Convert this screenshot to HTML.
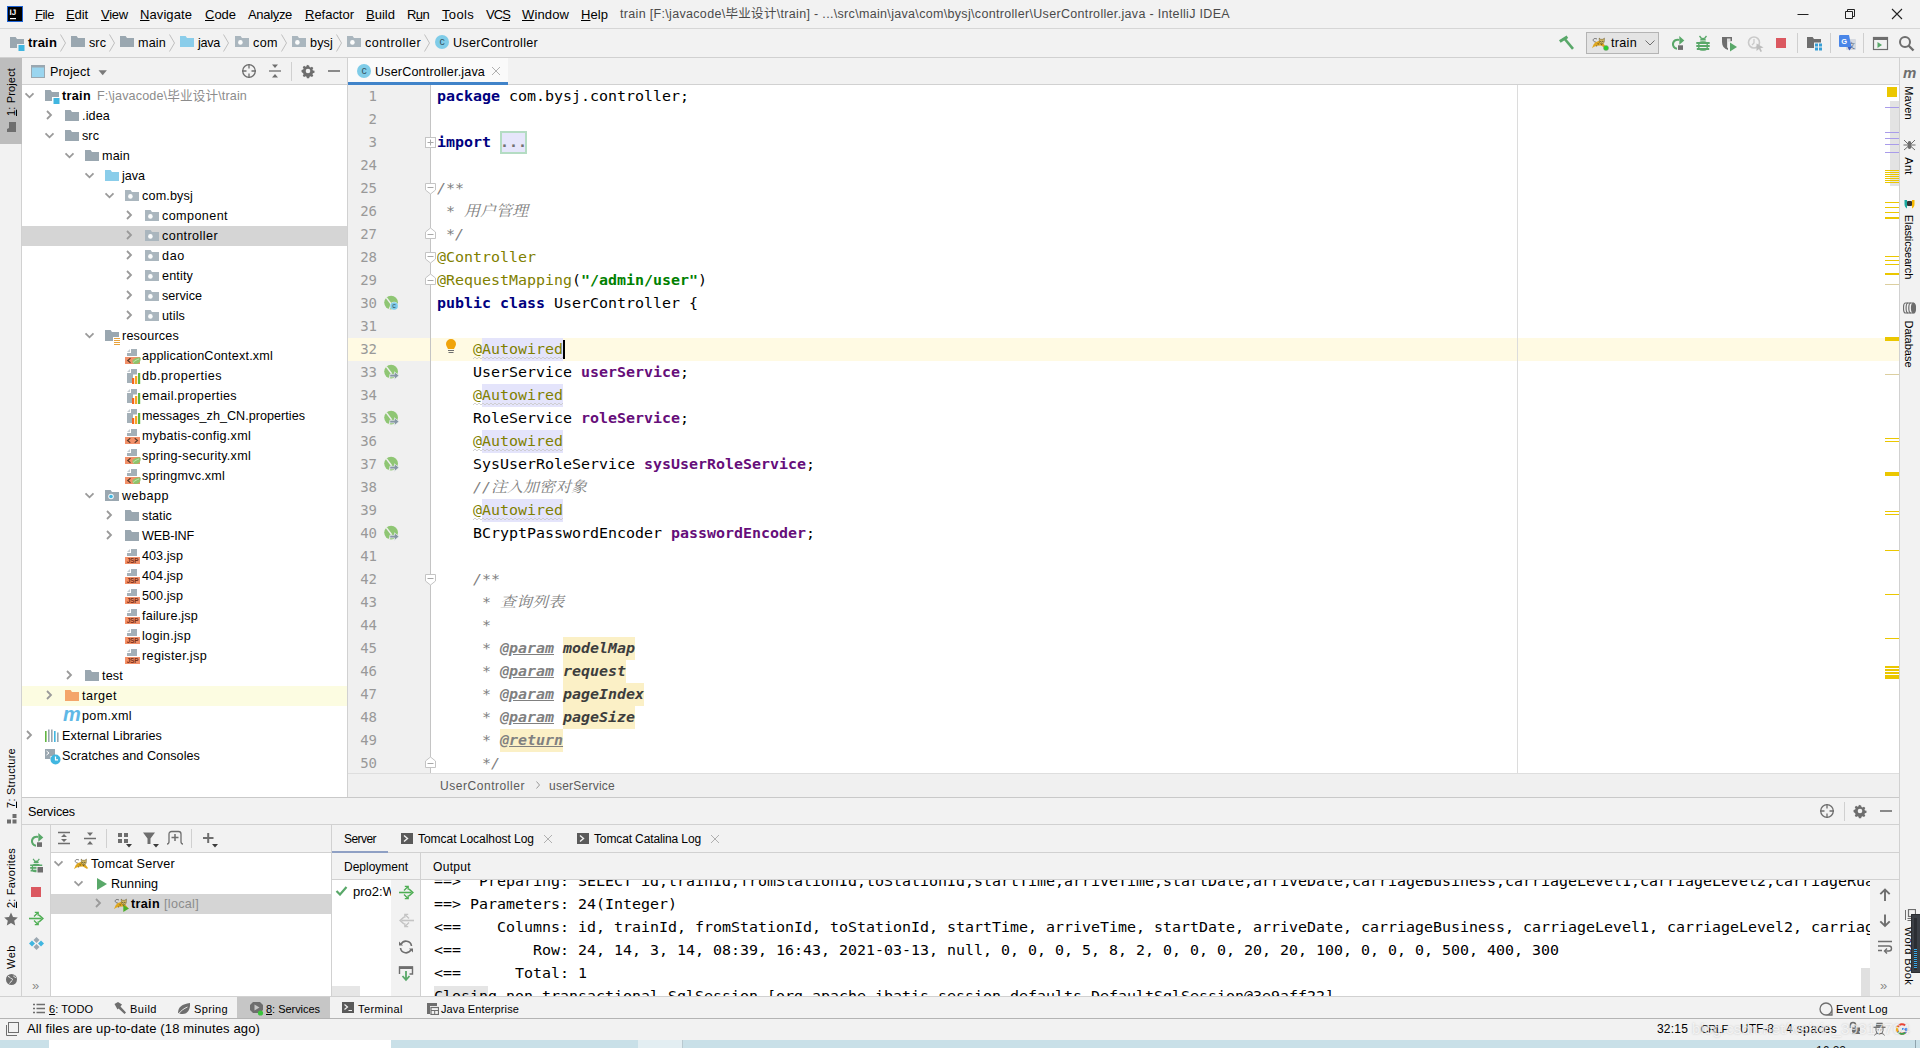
<!DOCTYPE html>
<html lang="en"><head><meta charset="utf-8"><title>train - UserController.java - IntelliJ IDEA</title>
<style>
html,body{margin:0;padding:0}
body{width:1920px;height:1048px;position:relative;overflow:hidden;background:#f2f2f2;font-family:"Liberation Sans","Noto Sans CJK SC",sans-serif;font-size:13px}
body div,body svg,.t{position:absolute}
.t{white-space:pre;line-height:20px;height:20px}
u{text-decoration:underline;text-underline-offset:1px}
.c{font-family:"DejaVu Sans Mono","Liberation Mono","Noto Serif CJK SC",monospace;font-size:14px;transform:scaleX(1.0678);transform-origin:0 0;line-height:23px;height:23px;white-space:pre;position:absolute;color:#000}
.c b{color:#000080}
.c i{color:#808080}
.cj{font-size:15px}
.c .dt{color:#808080}
.dp{color:#3d3d3d;font-weight:bold}
.an{color:#808000}
.st{color:#008000;font-weight:bold}
.fd{color:#660e7a;font-weight:bold}
.ln{font-family:"DejaVu Sans Mono","Liberation Mono",monospace;font-size:14px;line-height:23px;height:23px;color:#999;text-align:right;width:40px;position:absolute}
</style></head>
<body>
<div style="left:0px;top:0px;width:1920px;height:28px;background:#f2f2f2;"></div>
<div style="left:0px;top:28px;width:1920px;height:1px;background:#d6d6d6;"></div>
<svg style="left:7px;top:6px;" width="16" height="16" viewBox="0 0 16 16"><rect width="16" height="16" fill="#1d62d6"/><rect x="1" y="1" width="14" height="14" fill="#000"/><text x="2.600" y="9" font-family="Liberation Sans,sans-serif" font-weight="bold" font-size="8" fill="#fff" text-rendering="geometricPrecision">IJ</text><rect x="3" y="12" width="6" height="1.200" fill="#fff"/></svg>
<span class="t" style="left:35px;top:5px;font-size:13px;color:#000;letter-spacing:-0.492px;"><u>F</u>ile</span>
<span class="t" style="left:66px;top:5px;font-size:13px;color:#000;letter-spacing:-0.102px;"><u>E</u>dit</span>
<span class="t" style="left:101px;top:5px;font-size:13px;color:#000;letter-spacing:-0.238px;"><u>V</u>iew</span>
<span class="t" style="left:140px;top:5px;font-size:13px;color:#000;letter-spacing:0.086px;"><u>N</u>avigate</span>
<span class="t" style="left:205px;top:5px;font-size:13px;color:#000;letter-spacing:-0.023px;"><u>C</u>ode</span>
<span class="t" style="left:248px;top:5px;font-size:13px;color:#000;letter-spacing:-0.324px;">Anal<u>y</u>ze</span>
<span class="t" style="left:305px;top:5px;font-size:13px;color:#000;letter-spacing:-0.018px;"><u>R</u>efactor</span>
<span class="t" style="left:366px;top:5px;font-size:13px;color:#000;letter-spacing:0.016px;"><u>B</u>uild</span>
<span class="t" style="left:407px;top:5px;font-size:13px;color:#000;letter-spacing:-0.620px;">R<u>u</u>n</span>
<span class="t" style="left:442px;top:5px;font-size:13px;color:#000;letter-spacing:0.328px;"><u>T</u>ools</span>
<span class="t" style="left:486px;top:5px;font-size:13px;color:#000;letter-spacing:-0.911px;">VC<u>S</u></span>
<span class="t" style="left:522px;top:5px;font-size:13px;color:#000;letter-spacing:0.125px;"><u>W</u>indow</span>
<span class="t" style="left:581px;top:5px;font-size:13px;color:#000;letter-spacing:0.062px;"><u>H</u>elp</span>
<span class="t" style="left:620px;top:4px;font-size:12.5px;color:#4a4a4a;letter-spacing:0.322px;">train [F:\javacode\毕业设计\train] - ...\src\main\java\com\bysj\controller\UserController.java - IntelliJ IDEA</span>
<svg style="left:1797px;top:8px;" width="12" height="12" viewBox="0 0 12 12"><path d="M0.500 6.500h11" stroke="#222" stroke-width="1"/></svg>
<svg style="left:1844px;top:8px;" width="12" height="12" viewBox="0 0 12 12"><path d="M1.500 3.500h7v7h-7zM3.500 3.500v-2h7v7h-2" fill="none" stroke="#222" stroke-width="1"/></svg>
<svg style="left:1891px;top:8px;" width="12" height="12" viewBox="0 0 12 12"><path d="M1 1l10 10M11 1L1 11" stroke="#222" stroke-width="1.100"/></svg>
<div style="left:0px;top:29px;width:1920px;height:28px;background:#f2f2f2;"></div>
<div style="left:0px;top:57px;width:1920px;height:1px;background:#d1d1d1;"></div>
<svg style="left:9px;top:35px;" width="16" height="16" viewBox="0 0 16 16"><path d="M1 2h5.6l1.4 2H15v5H8v4H1z" fill="#9aa7b0"/><rect x="9.5" y="10" width="6" height="6" fill="#40b6e0"/></svg>
<span class="t" style="left:28px;top:33px;font-size:13px;color:#000;font-weight:bold;letter-spacing:0.166px;">train</span>
<svg style="left:59px;top:33px;" width="9" height="20" viewBox="0 0 9 20"><path d="M1.500 1.500l5 8.500-5 8.500" fill="none" stroke="#c0c0c0" stroke-width="1"/></svg>
<svg style="left:70px;top:34px;" width="16" height="16" viewBox="0 0 16 16"><path d="M1 2h5.6l1.4 2H15v9H1z" fill="#9aa7b0"/></svg>
<span class="t" style="left:89px;top:33px;font-size:12.6px;color:#000;letter-spacing:0.068px;">src</span>
<svg style="left:108px;top:33px;" width="9" height="20" viewBox="0 0 9 20"><path d="M1.500 1.500l5 8.500-5 8.500" fill="none" stroke="#c0c0c0" stroke-width="1"/></svg>
<svg style="left:119px;top:34px;" width="16" height="16" viewBox="0 0 16 16"><path d="M1 2h5.6l1.4 2H15v9H1z" fill="#9aa7b0"/></svg>
<span class="t" style="left:138px;top:33px;font-size:12.6px;color:#000;letter-spacing:0.176px;">main</span>
<svg style="left:168px;top:33px;" width="9" height="20" viewBox="0 0 9 20"><path d="M1.500 1.500l5 8.500-5 8.500" fill="none" stroke="#c0c0c0" stroke-width="1"/></svg>
<svg style="left:179px;top:34px;" width="16" height="16" viewBox="0 0 16 16"><path d="M1 2h5.6l1.4 2H15v9H1z" fill="#8acdea"/></svg>
<span class="t" style="left:198px;top:33px;font-size:12.6px;color:#000;letter-spacing:-0.277px;">java</span>
<svg style="left:222px;top:33px;" width="9" height="20" viewBox="0 0 9 20"><path d="M1.500 1.500l5 8.500-5 8.500" fill="none" stroke="#c0c0c0" stroke-width="1"/></svg>
<svg style="left:234px;top:34px;" width="16" height="16" viewBox="0 0 16 16"><path d="M1 2h5.6l1.4 2H15v9H1z" fill="#aab6be"/><circle cx="6.400" cy="8.400" r="2.300" fill="#fbfcfc"/></svg>
<span class="t" style="left:253px;top:33px;font-size:12.6px;color:#000;letter-spacing:0.401px;">com</span>
<svg style="left:280px;top:33px;" width="9" height="20" viewBox="0 0 9 20"><path d="M1.500 1.500l5 8.500-5 8.500" fill="none" stroke="#c0c0c0" stroke-width="1"/></svg>
<svg style="left:291px;top:34px;" width="16" height="16" viewBox="0 0 16 16"><path d="M1 2h5.6l1.4 2H15v9H1z" fill="#aab6be"/><circle cx="6.400" cy="8.400" r="2.300" fill="#fbfcfc"/></svg>
<span class="t" style="left:310px;top:33px;font-size:12.6px;color:#000;letter-spacing:0.148px;">bysj</span>
<svg style="left:335px;top:33px;" width="9" height="20" viewBox="0 0 9 20"><path d="M1.500 1.500l5 8.500-5 8.500" fill="none" stroke="#c0c0c0" stroke-width="1"/></svg>
<svg style="left:346px;top:34px;" width="16" height="16" viewBox="0 0 16 16"><path d="M1 2h5.6l1.4 2H15v9H1z" fill="#aab6be"/><circle cx="6.400" cy="8.400" r="2.300" fill="#fbfcfc"/></svg>
<span class="t" style="left:365px;top:33px;font-size:12.6px;color:#000;letter-spacing:0.420px;">controller</span>
<svg style="left:423px;top:33px;" width="9" height="20" viewBox="0 0 9 20"><path d="M1.500 1.500l5 8.500-5 8.500" fill="none" stroke="#c0c0c0" stroke-width="1"/></svg>
<svg style="left:434px;top:34px;" width="16" height="16" viewBox="0 0 16 16"><circle cx="8" cy="8" r="7" fill="#7fcce8"/><text x="8" y="11.200" font-family="Liberation Sans,sans-serif" font-size="10.500" fill="#34525e" text-anchor="middle">c</text></svg>
<span class="t" style="left:453px;top:33px;font-size:12.6px;color:#000;letter-spacing:0.272px;">UserController</span>
<svg style="left:1558px;top:35px;" width="18" height="16" viewBox="0 0 18 16"><path d="M1.800 6.500L9.400 1.700" stroke="#59a869" stroke-width="3" fill="none"/><path d="M6.800 4L15 13.800" stroke="#59a869" stroke-width="2.600" fill="none"/></svg>
<div style="left:1586px;top:32px;width:73px;height:22px;background:#e4e4e4;border:1px solid #b4b4b4;box-sizing:border-box"></div>
<svg style="left:1591px;top:34px;" width="17" height="17" viewBox="0 0 17 17"><path d="M5.200 8.200C3 8 1.800 6.800 2.300 5.500 2.800 4.300 4.500 4.300 6 5" fill="none" stroke="#4a4a4a" stroke-width=".7"/><path d="M4.500 8.300L9 6.500l3 2.500 3.200 4.300-1.600.5L10 11.600l-4 .1-3 1.100L1 14.300l1.500-3.800z" fill="#dea71f"/><path d="M6.500 9.300l1.500.5-1 .9zM5 11.500l1.300.3-.5 1zM10 10l1.300.8-1 .5z" fill="#3a3020"/><path d="M8.200 4.100l1.400 1.200h2.400l1.400-1.200-.2 3.900-1.200 1.700H9.600L8.400 8z" fill="#dcc268" stroke="#5a4a20" stroke-width=".5"/><path d="M9.300 7.300h1v.8h-1zM11.300 7.300h1v.8h-1zM10.300 8.600h1l-.5.700z" fill="#2a2418"/><path d="M9.800 5.800l.5.900M11.800 5.800l-.5.900" stroke="#a8862c" stroke-width=".5"/></svg>
<svg style="left:1602px;top:44px;" width="8" height="8" viewBox="0 0 8 8"><circle cx="4" cy="4" r="2.500" fill="#27d127" stroke="#8a8a8a" stroke-width=".5"/></svg>
<span class="t" style="left:1611px;top:33px;font-size:12.6px;color:#000;letter-spacing:0.300px;">train</span>
<svg style="left:1644px;top:38px;" width="12" height="10" viewBox="0 0 12 10"><path d="M1.500 2.500l4.500 4.500 4.500-4.500" fill="none" stroke="#6e6e6e" stroke-width="1"/></svg>
<svg style="left:1669px;top:34px;" width="17" height="17" viewBox="0 0 17 17"><path d="M10 6A4.500 4.500 0 1 0 8 14.700" fill="none" stroke="#59a869" stroke-width="2.100"/><path d="M10.300 2l5 4.400-5 4.400z" fill="#59a869"/><rect x="9" y="11.300" width="5" height="4.600" fill="#6e6e6e"/></svg>
<svg style="left:1695px;top:35px;" width="16" height="16" viewBox="0 0 16 16"><path d="M4.500 1l2 2.500M11.500 1l-2 2.500" stroke="#59a869" stroke-width="1.300" fill="none"/><path d="M5.200 5.500a2.800 2.800 0 0 1 5.600 0z" fill="#59a869"/><rect x="3" y="6.300" width="10" height="9.400" rx="4" fill="#59a869"/><path d="M1.300 8h13.400M1.300 11h13.400M1.800 14h12.400" stroke="#59a869" stroke-width="1.800"/><path d="M4.500 9.500h7M4.500 12.500h7" stroke="#f2f2f2" stroke-width="1"/></svg>
<svg style="left:1720px;top:35px;" width="18" height="17" viewBox="0 0 18 17"><path d="M2 2h10v4L8 7v8C4 13.500 2 11 2 7z" fill="#6e6e6e"/><path d="M7 3.500h3.500v8L7 13z" fill="#f2f2f2" opacity=".85"/><path d="M10 7.500l7 4.500-7 4.500z" fill="#59a869"/></svg>
<svg style="left:1747px;top:35px;" width="18" height="17" viewBox="0 0 18 17"><circle cx="7" cy="7.500" r="5.500" fill="none" stroke="#c9c9c9" stroke-width="1.600"/><path d="M7 4v4l-2 2" stroke="#c9c9c9" stroke-width="1.300" fill="none"/><path d="M9.500 8.500l7 4-3 .8 1.500 3-1.500.7-1.500-3-2.500 2z" fill="#bdbdbd"/></svg>
<div style="left:1776px;top:38px;width:10px;height:10px;background:#db5860;"></div>
<div style="left:1797px;top:33px;width:1px;height:20px;background:#cfcfcf;"></div>
<svg style="left:1806px;top:35px;" width="18" height="17" viewBox="0 0 18 17"><path d="M1 2h5.600l1.400 2H15v5H9v4H1z" fill="#6e6e6e"/><rect x="8" y="7.500" width="8.500" height="8.500" fill="#f2f2f2"/><rect x="9" y="8.500" width="3" height="3" fill="#389fd6"/><rect x="13" y="8.500" width="3" height="3" fill="#389fd6"/><rect x="9" y="12.500" width="3" height="3" fill="#389fd6"/><rect x="13" y="12.500" width="3" height="3" fill="#389fd6"/></svg>
<div style="left:1830px;top:33px;width:1px;height:20px;background:#cfcfcf;"></div>
<svg style="left:1838px;top:34px;" width="20" height="19" viewBox="0 0 20 19"><rect x="8" y="5" width="10" height="11" rx="1" fill="#d5d9e0"/><text x="13.500" y="14" font-size="7" fill="#5b6b86" text-anchor="middle" font-family="Noto Sans CJK SC,sans-serif">文</text><path d="M2 1h9l2.500 12H2a1 1 0 0 1-1-1V2a1 1 0 0 1 1-1z" fill="#4a86e8"/><text x="6.200" y="10" font-size="7.500" font-weight="bold" fill="#fff" text-anchor="middle" font-family="Liberation Sans,sans-serif">G</text><path d="M9.500 13l2 3.500 2-3.500z" fill="#3b5fc4"/></svg>
<div style="left:1863px;top:33px;width:1px;height:20px;background:#cfcfcf;"></div>
<svg style="left:1872px;top:36px;" width="17" height="15" viewBox="0 0 17 15"><rect x="1.500" y="1.500" width="14" height="12" fill="none" stroke="#6e6e6e" stroke-width="1.200"/><rect x="1" y="1" width="15" height="3" fill="#6e6e6e"/><path d="M5.500 6l4.500 3-4.500 3z" fill="#59a869"/></svg>
<svg style="left:1898px;top:35px;" width="17" height="17" viewBox="0 0 17 17"><circle cx="7" cy="7" r="5" fill="none" stroke="#6e6e6e" stroke-width="2"/><path d="M10.500 10.500l5 5" stroke="#6e6e6e" stroke-width="2.400"/></svg>
<div style="left:0px;top:58px;width:21px;height:939px;background:#f2f2f2;"></div>
<div style="left:21px;top:58px;width:1px;height:939px;background:#d1d1d1;"></div>
<div style="left:0px;top:58px;width:22px;height:86px;background:#bdbdbd;"></div>
<span class="t" style="left:11px;top:92px;font-size:11px;color:#000;transform:translate(-50%,-50%) rotate(-90deg);letter-spacing:0.152px;"><u>1</u>: Project</span>
<svg style="left:5px;top:122px;" width="12" height="10" viewBox="0 0 12 10"><path d="M0 1h4l1 2h7v7H0z" fill="#6e6e6e" transform="rotate(-90 6 5)"/></svg>
<span class="t" style="left:11px;top:778px;font-size:11px;color:#000;transform:translate(-50%,-50%) rotate(-90deg);letter-spacing:0.260px;"><u>7</u>: Structure</span>
<svg style="left:7px;top:814px;" width="10" height="10" viewBox="0 0 10 10"><rect x="5.500" y="0" width="4" height="4" fill="#6e6e6e"/><rect x="0" y="5.500" width="4" height="4" fill="#6e6e6e"/><rect x="5.500" y="5.500" width="4" height="4" fill="#6e6e6e"/></svg>
<span class="t" style="left:11px;top:878px;font-size:11px;color:#000;transform:translate(-50%,-50%) rotate(-90deg);letter-spacing:0.210px;"><u>2</u>: Favorites</span>
<svg style="left:4px;top:912px;" width="14" height="14" viewBox="0 0 14 14"><path d="M7 0.500l2 4.500 4.800.5-3.600 3.200 1 4.800L7 11l-4.200 2.500 1-4.800L0.200 5.500 5 5z" fill="#6e6e6e"/></svg>
<span class="t" style="left:11px;top:957px;font-size:11px;color:#000;transform:translate(-50%,-50%) rotate(-90deg);letter-spacing:0.526px;">Web</span>
<svg style="left:5px;top:973px;" width="13" height="13" viewBox="0 0 13 13"><circle cx="6.500" cy="6.500" r="5.500" fill="#6e6e6e"/><path d="M3 3.500c2 0 2 2 3.500 2s1 2 0 2.500-1 2-2 2.500M9 2.500c-.5 1.500 1 2 2 2" stroke="#f2f2f2" stroke-width="1" fill="none"/></svg>
<div style="left:22px;top:58px;width:325px;height:26px;background:#f2f2f2;"></div>
<div style="left:22px;top:84px;width:325px;height:1px;background:#d1d1d1;"></div>
<svg style="left:31px;top:65px;" width="16" height="14" viewBox="0 0 16 14"><rect x="0.500" y="0.500" width="13" height="12" fill="#9ad5ef" stroke="#9aa7b0"/><rect x="0" y="0" width="14" height="2.500" fill="#9aa7b0"/></svg>
<span class="t" style="left:50px;top:62px;font-size:12.6px;color:#000;letter-spacing:0.114px;">Project</span>
<svg style="left:98px;top:70px;" width="10" height="6" viewBox="0 0 10 6"><path d="M0.500 0.300h8.400l-4.200 5z" fill="#7a7a7a"/></svg>
<svg style="left:241px;top:63px;" width="16" height="16" viewBox="0 0 16 16"><circle cx="8" cy="8" r="6.300" fill="none" stroke="#6e6e6e" stroke-width="1.300"/><path d="M8 1v4.500M8 10.500V15M1 8h4.500M10.500 8H15" stroke="#6e6e6e" stroke-width="1.300"/></svg>
<svg style="left:268px;top:63px;" width="14" height="16" viewBox="0 0 14 16"><path d="M1 8h12" stroke="#6e6e6e" stroke-width="1.300"/><path d="M4 1.500h6l-3 3.500zM4 14.500h6l-3-3.500z" fill="#6e6e6e"/></svg>
<div style="left:291px;top:62px;width:1px;height:19px;background:#d0d0d0;"></div>
<svg style="left:300px;top:63px;" width="16" height="16" viewBox="0 0 16 16"><path d="M8 1.200l1.300.2.500 1.900 1.200.5 1.700-1 1.600 1.600-1 1.700.5 1.200 1.900.5v2.400l-1.900.5-.5 1.200 1 1.700-1.600 1.600-1.700-1-1.200.5-.5 1.900H6.700l-.5-1.900-1.200-.5-1.700 1-1.600-1.600 1-1.700-.5-1.200L.3 9.200V6.800l1.900-.5.500-1.200-1-1.700 1.600-1.600 1.700 1 1.200-.5.500-1.900z" fill="#6e6e6e" transform="translate(1.300,1.300) scale(.84)"/><circle cx="8" cy="8" r="2.300" fill="#f2f2f2"/></svg>
<svg style="left:327px;top:66px;" width="14" height="10" viewBox="0 0 14 10"><path d="M1 5h12" stroke="#6e6e6e" stroke-width="1.600"/></svg>
<div style="left:22px;top:85px;width:325px;height:712px;background:#fff;"></div>
<div style="left:347px;top:58px;width:1px;height:740px;background:#d1d1d1;"></div>
<svg style="left:24px;top:89.5px;" width="11" height="10" viewBox="0 0 11 10"><path d="M1.500 3.300l4 4 4-4" fill="none" stroke="#9a9a9a" stroke-width="1.800"/></svg>
<svg style="left:44px;top:88px;" width="16" height="16" viewBox="0 0 16 16"><path d="M1 2h5.6l1.4 2H15v5H8v4H1z" fill="#9aa7b0"/><rect x="9.5" y="10" width="6" height="6" fill="#40b6e0"/></svg>
<span class="t" style="left:62px;top:86px;font-size:12.6px;color:#000;font-weight:bold;letter-spacing:0.341px;">train</span>
<span class="t" style="left:97px;top:86px;font-size:12.6px;color:#8c8c8c;letter-spacing:0.137px;">F:\javacode\毕业设计\train</span>
<svg style="left:43.5px;top:108.5px;" width="10" height="12" viewBox="0 0 10 12"><path d="M3 2l4 4-4 4" fill="none" stroke="#9a9a9a" stroke-width="1.800"/></svg>
<svg style="left:64px;top:108px;" width="16" height="16" viewBox="0 0 16 16"><path d="M1 2h5.6l1.4 2H15v9H1z" fill="#9aa7b0"/></svg>
<span class="t" style="left:82px;top:106px;font-size:12.6px;color:#000;letter-spacing:0.138px;">.idea</span>
<svg style="left:44px;top:129.5px;" width="11" height="10" viewBox="0 0 11 10"><path d="M1.500 3.300l4 4 4-4" fill="none" stroke="#9a9a9a" stroke-width="1.800"/></svg>
<svg style="left:64px;top:128px;" width="16" height="16" viewBox="0 0 16 16"><path d="M1 2h5.6l1.4 2H15v9H1z" fill="#9aa7b0"/></svg>
<span class="t" style="left:82px;top:126px;font-size:12.6px;color:#000;letter-spacing:0.068px;">src</span>
<svg style="left:64px;top:149.5px;" width="11" height="10" viewBox="0 0 11 10"><path d="M1.500 3.300l4 4 4-4" fill="none" stroke="#9a9a9a" stroke-width="1.800"/></svg>
<svg style="left:84px;top:148px;" width="16" height="16" viewBox="0 0 16 16"><path d="M1 2h5.6l1.4 2H15v9H1z" fill="#9aa7b0"/></svg>
<span class="t" style="left:102px;top:146px;font-size:12.6px;color:#000;letter-spacing:0.176px;">main</span>
<svg style="left:84px;top:169.5px;" width="11" height="10" viewBox="0 0 11 10"><path d="M1.500 3.300l4 4 4-4" fill="none" stroke="#9a9a9a" stroke-width="1.800"/></svg>
<svg style="left:104px;top:168px;" width="16" height="16" viewBox="0 0 16 16"><path d="M1 2h5.6l1.4 2H15v9H1z" fill="#8acdea"/></svg>
<span class="t" style="left:122px;top:166px;font-size:12.6px;color:#000;letter-spacing:-0.027px;">java</span>
<svg style="left:104px;top:189.5px;" width="11" height="10" viewBox="0 0 11 10"><path d="M1.500 3.300l4 4 4-4" fill="none" stroke="#9a9a9a" stroke-width="1.800"/></svg>
<svg style="left:124px;top:188px;" width="16" height="16" viewBox="0 0 16 16"><path d="M1 2h5.6l1.4 2H15v9H1z" fill="#aab6be"/><circle cx="6.400" cy="8.400" r="2.300" fill="#fbfcfc"/></svg>
<span class="t" style="left:142px;top:186px;font-size:12.6px;color:#000;letter-spacing:0.164px;">com.bysj</span>
<svg style="left:123.5px;top:208.5px;" width="10" height="12" viewBox="0 0 10 12"><path d="M3 2l4 4-4 4" fill="none" stroke="#9a9a9a" stroke-width="1.800"/></svg>
<svg style="left:144px;top:208px;" width="16" height="16" viewBox="0 0 16 16"><path d="M1 2h5.6l1.4 2H15v9H1z" fill="#aab6be"/><circle cx="6.400" cy="8.400" r="2.300" fill="#fbfcfc"/></svg>
<span class="t" style="left:162px;top:206px;font-size:12.6px;color:#000;letter-spacing:0.410px;">component</span>
<div style="left:22px;top:226px;width:325px;height:20px;background:#d5d5d5;"></div>
<svg style="left:123.5px;top:228.5px;" width="10" height="12" viewBox="0 0 10 12"><path d="M3 2l4 4-4 4" fill="none" stroke="#9a9a9a" stroke-width="1.800"/></svg>
<svg style="left:144px;top:228px;" width="16" height="16" viewBox="0 0 16 16"><path d="M1 2h5.6l1.4 2H15v9H1z" fill="#aab6be"/><circle cx="6.400" cy="8.400" r="2.300" fill="#fbfcfc"/></svg>
<span class="t" style="left:162px;top:226px;font-size:12.6px;color:#000;letter-spacing:0.420px;">controller</span>
<svg style="left:123.5px;top:248.5px;" width="10" height="12" viewBox="0 0 10 12"><path d="M3 2l4 4-4 4" fill="none" stroke="#9a9a9a" stroke-width="1.800"/></svg>
<svg style="left:144px;top:248px;" width="16" height="16" viewBox="0 0 16 16"><path d="M1 2h5.6l1.4 2H15v9H1z" fill="#aab6be"/><circle cx="6.400" cy="8.400" r="2.300" fill="#fbfcfc"/></svg>
<span class="t" style="left:162px;top:246px;font-size:12.6px;color:#000;letter-spacing:0.661px;">dao</span>
<svg style="left:123.5px;top:268.5px;" width="10" height="12" viewBox="0 0 10 12"><path d="M3 2l4 4-4 4" fill="none" stroke="#9a9a9a" stroke-width="1.800"/></svg>
<svg style="left:144px;top:268px;" width="16" height="16" viewBox="0 0 16 16"><path d="M1 2h5.6l1.4 2H15v9H1z" fill="#aab6be"/><circle cx="6.400" cy="8.400" r="2.300" fill="#fbfcfc"/></svg>
<span class="t" style="left:162px;top:266px;font-size:12.6px;color:#000;letter-spacing:0.148px;">entity</span>
<svg style="left:123.5px;top:288.5px;" width="10" height="12" viewBox="0 0 10 12"><path d="M3 2l4 4-4 4" fill="none" stroke="#9a9a9a" stroke-width="1.800"/></svg>
<svg style="left:144px;top:288px;" width="16" height="16" viewBox="0 0 16 16"><path d="M1 2h5.6l1.4 2H15v9H1z" fill="#aab6be"/><circle cx="6.400" cy="8.400" r="2.300" fill="#fbfcfc"/></svg>
<span class="t" style="left:162px;top:286px;font-size:12.6px;color:#000;letter-spacing:0.016px;">service</span>
<svg style="left:123.5px;top:308.5px;" width="10" height="12" viewBox="0 0 10 12"><path d="M3 2l4 4-4 4" fill="none" stroke="#9a9a9a" stroke-width="1.800"/></svg>
<svg style="left:144px;top:308px;" width="16" height="16" viewBox="0 0 16 16"><path d="M1 2h5.6l1.4 2H15v9H1z" fill="#aab6be"/><circle cx="6.400" cy="8.400" r="2.300" fill="#fbfcfc"/></svg>
<span class="t" style="left:162px;top:306px;font-size:12.6px;color:#000;letter-spacing:0.119px;">utils</span>
<svg style="left:84px;top:329.5px;" width="11" height="10" viewBox="0 0 11 10"><path d="M1.500 3.300l4 4 4-4" fill="none" stroke="#9a9a9a" stroke-width="1.800"/></svg>
<svg style="left:104px;top:328px;" width="17" height="17" viewBox="0 0 17 17"><path d="M1 2h5.6l1.4 2H15v5H9v4H1z" fill="#9aa7b0"/><path d="M10 10.5h6M10 12.5h6M10 14.5h6M10 16.5h6" stroke="#e8a33d" stroke-width="1"/></svg>
<span class="t" style="left:122px;top:326px;font-size:12.6px;color:#000;letter-spacing:0.189px;">resources</span>
<svg style="left:125px;top:348px;" width="17" height="16" viewBox="0 0 17 16"><path d="M6 1h6v7H2V5h4z" fill="#9aa7b0" opacity=".9"/><path d="M5 1L2 4h3z" fill="#9aa7b0" opacity=".6"/><rect x="0" y="9" width="15" height="7" fill="#f29069"/><path d="M5.5 10.3L2.7 12.5l2.8 2.2" fill="none" stroke="#5a3a2a" stroke-width="1.1"/><path d="M7.5 14.5c-.6-3 2-5 8-5 .6 3.5-1 6.5-4.5 6.5-1.6 0-2.6-.5-3.5-1.500z" fill="#8fc36b"/><path d="M8 14.6c2-2 4-3 6-3.6" stroke="#d9efcb" stroke-width=".7" fill="none"/></svg>
<span class="t" style="left:142px;top:346px;font-size:12.6px;color:#000;letter-spacing:0.195px;">applicationContext.xml</span>
<svg style="left:125px;top:368px;" width="16" height="16" viewBox="0 0 16 16"><path d="M6 1h6v5.500H8V15H2V5h4z" fill="#9aa7b0" opacity=".9"/><path d="M5 1L2 4h3z" fill="#9aa7b0" opacity=".6"/><rect x="7" y="10" width="2.200" height="6" fill="#f26522"/><rect x="10" y="8" width="2.200" height="8" fill="#f5a623"/><rect x="13" y="5" width="2.200" height="11" fill="#62b543"/></svg>
<span class="t" style="left:142px;top:366px;font-size:12.6px;color:#000;letter-spacing:0.499px;">db.properties</span>
<svg style="left:125px;top:388px;" width="16" height="16" viewBox="0 0 16 16"><path d="M6 1h6v5.500H8V15H2V5h4z" fill="#9aa7b0" opacity=".9"/><path d="M5 1L2 4h3z" fill="#9aa7b0" opacity=".6"/><rect x="7" y="10" width="2.200" height="6" fill="#f26522"/><rect x="10" y="8" width="2.200" height="8" fill="#f5a623"/><rect x="13" y="5" width="2.200" height="11" fill="#62b543"/></svg>
<span class="t" style="left:142px;top:386px;font-size:12.6px;color:#000;letter-spacing:0.337px;">email.properties</span>
<svg style="left:125px;top:408px;" width="16" height="16" viewBox="0 0 16 16"><path d="M6 1h6v5.500H8V15H2V5h4z" fill="#9aa7b0" opacity=".9"/><path d="M5 1L2 4h3z" fill="#9aa7b0" opacity=".6"/><rect x="7" y="10" width="2.200" height="6" fill="#f26522"/><rect x="10" y="8" width="2.200" height="8" fill="#f5a623"/><rect x="13" y="5" width="2.200" height="11" fill="#62b543"/></svg>
<span class="t" style="left:142px;top:406px;font-size:12.6px;color:#000;letter-spacing:0.024px;">messages_zh_CN.properties</span>
<svg style="left:125px;top:428px;" width="16" height="16" viewBox="0 0 16 16"><path d="M6 1h6v7H2V5h4z" fill="#9aa7b0" opacity=".9"/><path d="M5 1L2 4h3z" fill="#9aa7b0" opacity=".6"/><rect x="0" y="9" width="15" height="7" fill="#f29069"/><path d="M5.3 10.3L2.5 12.5l2.800 2.200M9.700 10.300l2.800 2.200-2.800 2.200" fill="none" stroke="#5a3a2a" stroke-width="1.1"/></svg>
<span class="t" style="left:142px;top:426px;font-size:12.6px;color:#000;letter-spacing:0.262px;">mybatis-config.xml</span>
<svg style="left:125px;top:448px;" width="17" height="16" viewBox="0 0 17 16"><path d="M6 1h6v7H2V5h4z" fill="#9aa7b0" opacity=".9"/><path d="M5 1L2 4h3z" fill="#9aa7b0" opacity=".6"/><rect x="0" y="9" width="15" height="7" fill="#f29069"/><path d="M5.5 10.3L2.7 12.5l2.8 2.2" fill="none" stroke="#5a3a2a" stroke-width="1.1"/><path d="M7.5 14.5c-.6-3 2-5 8-5 .6 3.5-1 6.5-4.5 6.5-1.6 0-2.6-.5-3.5-1.500z" fill="#8fc36b"/><path d="M8 14.6c2-2 4-3 6-3.6" stroke="#d9efcb" stroke-width=".7" fill="none"/></svg>
<span class="t" style="left:142px;top:446px;font-size:12.6px;color:#000;letter-spacing:0.261px;">spring-security.xml</span>
<svg style="left:125px;top:468px;" width="17" height="16" viewBox="0 0 17 16"><path d="M6 1h6v7H2V5h4z" fill="#9aa7b0" opacity=".9"/><path d="M5 1L2 4h3z" fill="#9aa7b0" opacity=".6"/><rect x="0" y="9" width="15" height="7" fill="#f29069"/><path d="M5.5 10.3L2.7 12.5l2.8 2.2" fill="none" stroke="#5a3a2a" stroke-width="1.1"/><path d="M7.5 14.5c-.6-3 2-5 8-5 .6 3.5-1 6.5-4.5 6.5-1.6 0-2.6-.5-3.5-1.500z" fill="#8fc36b"/><path d="M8 14.6c2-2 4-3 6-3.6" stroke="#d9efcb" stroke-width=".7" fill="none"/></svg>
<span class="t" style="left:142px;top:466px;font-size:12.6px;color:#000;letter-spacing:0.194px;">springmvc.xml</span>
<svg style="left:84px;top:489.5px;" width="11" height="10" viewBox="0 0 11 10"><path d="M1.500 3.300l4 4 4-4" fill="none" stroke="#9a9a9a" stroke-width="1.800"/></svg>
<svg style="left:104px;top:488px;" width="16" height="16" viewBox="0 0 16 16"><path d="M1 2h5.6l1.4 2H15v9H1z" fill="#9aa7b0"/><circle cx="7" cy="8.5" r="2.8" fill="#eef6fb"/><circle cx="7" cy="8.5" r="1.8" fill="#40b6e0"/></svg>
<span class="t" style="left:122px;top:486px;font-size:12.6px;color:#000;letter-spacing:0.479px;">webapp</span>
<svg style="left:103.5px;top:508.5px;" width="10" height="12" viewBox="0 0 10 12"><path d="M3 2l4 4-4 4" fill="none" stroke="#9a9a9a" stroke-width="1.800"/></svg>
<svg style="left:124px;top:508px;" width="16" height="16" viewBox="0 0 16 16"><path d="M1 2h5.6l1.4 2H15v9H1z" fill="#9aa7b0"/></svg>
<span class="t" style="left:142px;top:506px;font-size:12.6px;color:#000;letter-spacing:0.099px;">static</span>
<svg style="left:103.5px;top:528.5px;" width="10" height="12" viewBox="0 0 10 12"><path d="M3 2l4 4-4 4" fill="none" stroke="#9a9a9a" stroke-width="1.800"/></svg>
<svg style="left:124px;top:528px;" width="16" height="16" viewBox="0 0 16 16"><path d="M1 2h5.6l1.4 2H15v9H1z" fill="#9aa7b0"/></svg>
<span class="t" style="left:142px;top:526px;font-size:12.6px;color:#000;letter-spacing:-0.167px;">WEB-INF</span>
<svg style="left:125px;top:548px;" width="16" height="16" viewBox="0 0 16 16"><path d="M6 1h6v7H2V5h4z" fill="#9aa7b0" opacity=".9"/><path d="M5 1L2 4h3z" fill="#9aa7b0" opacity=".6"/><rect x="0" y="9" width="15" height="7" fill="#f29069"/><text x="7.500" y="15.200" font-family="Liberation Sans,sans-serif" font-size="6.500" font-weight="bold" fill="#7a3018" text-anchor="middle" letter-spacing="-.2">JSP</text></svg>
<span class="t" style="left:142px;top:546px;font-size:12.6px;color:#000;letter-spacing:0.054px;">403.jsp</span>
<svg style="left:125px;top:568px;" width="16" height="16" viewBox="0 0 16 16"><path d="M6 1h6v7H2V5h4z" fill="#9aa7b0" opacity=".9"/><path d="M5 1L2 4h3z" fill="#9aa7b0" opacity=".6"/><rect x="0" y="9" width="15" height="7" fill="#f29069"/><text x="7.500" y="15.200" font-family="Liberation Sans,sans-serif" font-size="6.500" font-weight="bold" fill="#7a3018" text-anchor="middle" letter-spacing="-.2">JSP</text></svg>
<span class="t" style="left:142px;top:566px;font-size:12.6px;color:#000;letter-spacing:0.054px;">404.jsp</span>
<svg style="left:125px;top:588px;" width="16" height="16" viewBox="0 0 16 16"><path d="M6 1h6v7H2V5h4z" fill="#9aa7b0" opacity=".9"/><path d="M5 1L2 4h3z" fill="#9aa7b0" opacity=".6"/><rect x="0" y="9" width="15" height="7" fill="#f29069"/><text x="7.500" y="15.200" font-family="Liberation Sans,sans-serif" font-size="6.500" font-weight="bold" fill="#7a3018" text-anchor="middle" letter-spacing="-.2">JSP</text></svg>
<span class="t" style="left:142px;top:586px;font-size:12.6px;color:#000;letter-spacing:0.054px;">500.jsp</span>
<svg style="left:125px;top:608px;" width="16" height="16" viewBox="0 0 16 16"><path d="M6 1h6v7H2V5h4z" fill="#9aa7b0" opacity=".9"/><path d="M5 1L2 4h3z" fill="#9aa7b0" opacity=".6"/><rect x="0" y="9" width="15" height="7" fill="#f29069"/><text x="7.500" y="15.200" font-family="Liberation Sans,sans-serif" font-size="6.500" font-weight="bold" fill="#7a3018" text-anchor="middle" letter-spacing="-.2">JSP</text></svg>
<span class="t" style="left:142px;top:606px;font-size:12.6px;color:#000;letter-spacing:0.190px;">failure.jsp</span>
<svg style="left:125px;top:628px;" width="16" height="16" viewBox="0 0 16 16"><path d="M6 1h6v7H2V5h4z" fill="#9aa7b0" opacity=".9"/><path d="M5 1L2 4h3z" fill="#9aa7b0" opacity=".6"/><rect x="0" y="9" width="15" height="7" fill="#f29069"/><text x="7.500" y="15.200" font-family="Liberation Sans,sans-serif" font-size="6.500" font-weight="bold" fill="#7a3018" text-anchor="middle" letter-spacing="-.2">JSP</text></svg>
<span class="t" style="left:142px;top:626px;font-size:12.6px;color:#000;letter-spacing:0.309px;">login.jsp</span>
<svg style="left:125px;top:648px;" width="16" height="16" viewBox="0 0 16 16"><path d="M6 1h6v7H2V5h4z" fill="#9aa7b0" opacity=".9"/><path d="M5 1L2 4h3z" fill="#9aa7b0" opacity=".6"/><rect x="0" y="9" width="15" height="7" fill="#f29069"/><text x="7.500" y="15.200" font-family="Liberation Sans,sans-serif" font-size="6.500" font-weight="bold" fill="#7a3018" text-anchor="middle" letter-spacing="-.2">JSP</text></svg>
<span class="t" style="left:142px;top:646px;font-size:12.6px;color:#000;letter-spacing:0.341px;">register.jsp</span>
<svg style="left:63.5px;top:668.5px;" width="10" height="12" viewBox="0 0 10 12"><path d="M3 2l4 4-4 4" fill="none" stroke="#9a9a9a" stroke-width="1.800"/></svg>
<svg style="left:84px;top:668px;" width="16" height="16" viewBox="0 0 16 16"><path d="M1 2h5.6l1.4 2H15v9H1z" fill="#9aa7b0"/></svg>
<span class="t" style="left:102px;top:666px;font-size:12.6px;color:#000;letter-spacing:0.172px;">test</span>
<div style="left:22px;top:686px;width:325px;height:20px;background:#fcfce1;"></div>
<svg style="left:43.5px;top:688.5px;" width="10" height="12" viewBox="0 0 10 12"><path d="M3 2l4 4-4 4" fill="none" stroke="#9a9a9a" stroke-width="1.800"/></svg>
<svg style="left:64px;top:688px;" width="16" height="16" viewBox="0 0 16 16"><path d="M1 2h5.6l1.4 2H15v9H1z" fill="#f4a56a"/></svg>
<span class="t" style="left:82px;top:686px;font-size:12.6px;color:#000;letter-spacing:0.464px;">target</span>
<span class="t" style="left:63px;top:704px;font-size:20px;color:#5fb8e6;font-weight:bold;font-style:italic;">m</span>
<span class="t" style="left:82px;top:706px;font-size:12.6px;color:#000;letter-spacing:0.344px;">pom.xml</span>
<svg style="left:23.5px;top:728.5px;" width="10" height="12" viewBox="0 0 10 12"><path d="M3 2l4 4-4 4" fill="none" stroke="#9a9a9a" stroke-width="1.800"/></svg>
<svg style="left:44px;top:728px;" width="16" height="16" viewBox="0 0 16 16"><rect x="1" y="3" width="1.6" height="11" fill="#62b543"/><rect x="4" y="1.500" width="1.600" height="12.500" fill="#9aa7b0"/><rect x="7" y="1.500" width="1.600" height="12.500" fill="#9aa7b0"/><rect x="10" y="3" width="1.600" height="11" fill="#40b6e0"/><rect x="13" y="4.500" width="1.600" height="9.500" fill="#9aa7b0"/></svg>
<span class="t" style="left:62px;top:726px;font-size:12.6px;color:#000;letter-spacing:0.111px;">External Libraries</span>
<svg style="left:44px;top:748px;" width="17" height="17" viewBox="0 0 17 17"><path d="M1 1h10v7H6.500v3H1z" fill="#9aa7b0"/><path d="M2.500 3l2.500 2-2.500 2" fill="none" stroke="#fff" stroke-width="1"/><circle cx="11.500" cy="11.500" r="5" fill="#40b6e0"/><path d="M11.500 8.500v3.300h2.500" fill="none" stroke="#fff" stroke-width="1.200"/></svg>
<span class="t" style="left:62px;top:746px;font-size:12.6px;color:#000;letter-spacing:0.067px;">Scratches and Consoles</span>
<div style="left:348px;top:58px;width:1551px;height:26px;background:#f2f2f2;"></div>
<div style="left:348px;top:84px;width:1551px;height:1px;background:#d1d1d1;"></div>
<div style="left:348px;top:58px;width:160px;height:24px;background:#fafafa;"></div>
<div style="left:348px;top:82px;width:160px;height:3px;background:#4083c9;"></div>
<svg style="left:356px;top:63px;" width="16" height="16" viewBox="0 0 16 16"><circle cx="8" cy="8" r="7" fill="#7fcce8"/><text x="8" y="11.200" font-family="Liberation Sans,sans-serif" font-size="10.500" fill="#34525e" text-anchor="middle">c</text></svg>
<span class="t" style="left:375px;top:62px;font-size:12.6px;color:#000;letter-spacing:0.153px;">UserController.java</span>
<svg style="left:491px;top:66px;" width="10" height="10" viewBox="0 0 10 10"><path d="M1 1l8 8M9 1L1 9" stroke="#b0b0b0" stroke-width="1"/></svg>
<div style="left:348px;top:85px;width:1551px;height:688px;background:#fff;"></div>
<div style="left:348px;top:85px;width:82px;height:688px;background:#f0f0f0;"></div>
<div style="left:430px;top:85px;width:1px;height:688px;background:#c4c4c4;"></div>
<div style="left:348px;top:338px;width:1551px;height:23px;background:#fffae3;"></div>
<div style="left:431px;top:338px;width:1468px;height:23px;background:#fffae3;"></div>
<div style="left:430px;top:338px;width:1px;height:23px;background:#c4c4c4;"></div>
<div style="left:1517px;top:85px;width:1px;height:688px;background:#dcdcdc;"></div>
<div style="left:500px;top:131px;width:27px;height:23px;background:#e6e6fb;border:2px solid #b4dcc3;box-sizing:border-box"></div>
<div style="left:482px;top:338px;width:81px;height:23px;background:#e4e4fb;"></div>
<div style="left:482px;top:384px;width:81px;height:23px;background:#e4e4fb;"></div>
<div style="left:482px;top:430px;width:81px;height:23px;background:#e4e4fb;"></div>
<div style="left:482px;top:499px;width:81px;height:23px;background:#e4e4fb;"></div>
<div style="left:563px;top:637px;width:72px;height:23px;background:#fbf0c6;"></div>
<div style="left:563px;top:660px;width:63px;height:23px;background:#fbf0c6;"></div>
<div style="left:563px;top:683px;width:81px;height:23px;background:#fbf0c6;"></div>
<div style="left:563px;top:706px;width:72px;height:23px;background:#fbf0c6;"></div>
<div style="left:500px;top:729px;width:63px;height:23px;background:#fbf0c6;"></div>
<div class="ln" style="left:337px;top:85px">1</div>
<div class="c" style="left:437px;top:85px"><b>package</b> com.bysj.controller;</div>
<div class="ln" style="left:337px;top:108px">2</div>
<div class="ln" style="left:337px;top:131px">3</div>
<div class="c" style="left:437px;top:131px"><b>import</b> <span style="color:#707070;font-weight:bold">...</span></div>
<div class="ln" style="left:337px;top:154px">24</div>
<div class="ln" style="left:337px;top:177px">25</div>
<div class="c" style="left:437px;top:177px"><i>/**</i></div>
<div class="ln" style="left:337px;top:200px">26</div>
<div class="c" style="left:437px;top:200px"><i> * <span class="cj">用户管理</span></i></div>
<div class="ln" style="left:337px;top:223px">27</div>
<div class="c" style="left:437px;top:223px"><i> */</i></div>
<div class="ln" style="left:337px;top:246px">28</div>
<div class="c" style="left:437px;top:246px"><span class="an">@Controller</span></div>
<div class="ln" style="left:337px;top:269px">29</div>
<div class="c" style="left:437px;top:269px"><span class="an">@RequestMapping</span>(<span class="st">"/admin/user"</span>)</div>
<div class="ln" style="left:337px;top:292px">30</div>
<div class="c" style="left:437px;top:292px"><b>public class</b> UserController {</div>
<div class="ln" style="left:337px;top:315px">31</div>
<div class="ln" style="left:337px;top:338px">32</div>
<div class="c" style="left:437px;top:338px">    <span class="an">@Autowired</span></div>
<div class="ln" style="left:337px;top:361px">33</div>
<div class="c" style="left:437px;top:361px">    UserService <span class="fd">userService</span>;</div>
<div class="ln" style="left:337px;top:384px">34</div>
<div class="c" style="left:437px;top:384px">    <span class="an">@Autowired</span></div>
<div class="ln" style="left:337px;top:407px">35</div>
<div class="c" style="left:437px;top:407px">    RoleService <span class="fd">roleService</span>;</div>
<div class="ln" style="left:337px;top:430px">36</div>
<div class="c" style="left:437px;top:430px">    <span class="an">@Autowired</span></div>
<div class="ln" style="left:337px;top:453px">37</div>
<div class="c" style="left:437px;top:453px">    SysUserRoleService <span class="fd">sysUserRoleService</span>;</div>
<div class="ln" style="left:337px;top:476px">38</div>
<div class="c" style="left:437px;top:476px">    <i>//<span class="cj">注入加密对象</span></i></div>
<div class="ln" style="left:337px;top:499px">39</div>
<div class="c" style="left:437px;top:499px">    <span class="an">@Autowired</span></div>
<div class="ln" style="left:337px;top:522px">40</div>
<div class="c" style="left:437px;top:522px">    BCryptPasswordEncoder <span class="fd">passwordEncoder</span>;</div>
<div class="ln" style="left:337px;top:545px">41</div>
<div class="ln" style="left:337px;top:568px">42</div>
<div class="c" style="left:437px;top:568px">    <i>/**</i></div>
<div class="ln" style="left:337px;top:591px">43</div>
<div class="c" style="left:437px;top:591px">    <i> * <span class="cj">查询列表</span></i></div>
<div class="ln" style="left:337px;top:614px">44</div>
<div class="c" style="left:437px;top:614px">    <i> *</i></div>
<div class="ln" style="left:337px;top:637px">45</div>
<div class="c" style="left:437px;top:637px">    <i> * <b class="dt"><u>@param</u></b> <span class="dp">modelMap</span></i></div>
<div class="ln" style="left:337px;top:660px">46</div>
<div class="c" style="left:437px;top:660px">    <i> * <b class="dt"><u>@param</u></b> <span class="dp">request</span></i></div>
<div class="ln" style="left:337px;top:683px">47</div>
<div class="c" style="left:437px;top:683px">    <i> * <b class="dt"><u>@param</u></b> <span class="dp">pageIndex</span></i></div>
<div class="ln" style="left:337px;top:706px">48</div>
<div class="c" style="left:437px;top:706px">    <i> * <b class="dt"><u>@param</u></b> <span class="dp">pageSize</span></i></div>
<div class="ln" style="left:337px;top:729px">49</div>
<div class="c" style="left:437px;top:729px">    <i> * <b class="dt"><u>@return</u></b></i></div>
<div class="ln" style="left:337px;top:752px">50</div>
<div class="c" style="left:437px;top:752px">    <i> */</i></div>
<div style="left:563px;top:340px;width:2px;height:19px;background:#000;"></div>
<svg style="left:473px;top:357px;" width="90" height="3" viewBox="0 0 90 3"><path d="M0 2l2 -2l2 2l2 -2l2 2l2 -2l2 2l2 -2l2 2l2 -2l2 2l2 -2l2 2l2 -2l2 2l2 -2l2 2l2 -2l2 2l2 -2l2 2l2 -2l2 2l2 -2l2 2l2 -2l2 2l2 -2l2 2l2 -2l2 2l2 -2l2 2l2 -2l2 2l2 -2l2 2l2 -2l2 2l2 -2l2 2l2 -2l2 2l2 -2l2 2l2 -2" fill="none" stroke="#c8c8c8" stroke-width=".8"/></svg>
<svg style="left:473px;top:403px;" width="90" height="3" viewBox="0 0 90 3"><path d="M0 2l2 -2l2 2l2 -2l2 2l2 -2l2 2l2 -2l2 2l2 -2l2 2l2 -2l2 2l2 -2l2 2l2 -2l2 2l2 -2l2 2l2 -2l2 2l2 -2l2 2l2 -2l2 2l2 -2l2 2l2 -2l2 2l2 -2l2 2l2 -2l2 2l2 -2l2 2l2 -2l2 2l2 -2l2 2l2 -2l2 2l2 -2l2 2l2 -2l2 2l2 -2" fill="none" stroke="#c8c8c8" stroke-width=".8"/></svg>
<svg style="left:473px;top:449px;" width="90" height="3" viewBox="0 0 90 3"><path d="M0 2l2 -2l2 2l2 -2l2 2l2 -2l2 2l2 -2l2 2l2 -2l2 2l2 -2l2 2l2 -2l2 2l2 -2l2 2l2 -2l2 2l2 -2l2 2l2 -2l2 2l2 -2l2 2l2 -2l2 2l2 -2l2 2l2 -2l2 2l2 -2l2 2l2 -2l2 2l2 -2l2 2l2 -2l2 2l2 -2l2 2l2 -2l2 2l2 -2l2 2l2 -2" fill="none" stroke="#c8c8c8" stroke-width=".8"/></svg>
<svg style="left:473px;top:518px;" width="90" height="3" viewBox="0 0 90 3"><path d="M0 2l2 -2l2 2l2 -2l2 2l2 -2l2 2l2 -2l2 2l2 -2l2 2l2 -2l2 2l2 -2l2 2l2 -2l2 2l2 -2l2 2l2 -2l2 2l2 -2l2 2l2 -2l2 2l2 -2l2 2l2 -2l2 2l2 -2l2 2l2 -2l2 2l2 -2l2 2l2 -2l2 2l2 -2l2 2l2 -2l2 2l2 -2l2 2l2 -2l2 2l2 -2" fill="none" stroke="#c8c8c8" stroke-width=".8"/></svg>
<svg style="left:384px;top:295px;" width="17" height="17" viewBox="0 0 17 17"><circle cx="7.100" cy="7.600" r="6.900" fill="#8fc674"/><path d="M2.200 2.500l5.300 7" stroke="#f0f0f0" stroke-width="1.300" fill="none"/><path d="M7.500 9.500l-2.700 5" stroke="#f0f0f0" stroke-width="1.100" fill="none"/><circle cx="10.100" cy="11" r="4.300" fill="#f0f0f0"/><circle cx="10.100" cy="11" r="3.800" fill="#7fcce8"/><text x="10.100" y="13.300" font-size="7" font-family="Liberation Sans,sans-serif" text-anchor="middle" fill="#31505c">c</text></svg>
<svg style="left:384px;top:364px;" width="17" height="17" viewBox="0 0 17 17"><circle cx="7.100" cy="7.600" r="6.900" fill="#8fc674"/><path d="M2.200 2.500l5.300 7" stroke="#f0f0f0" stroke-width="1.300" fill="none"/><path d="M7.500 9.500l-2.700 5" stroke="#f0f0f0" stroke-width="1.100" fill="none"/><path d="M5.800 10.300h4.700V7.800l4.500 3.800-4.500 3.800v-2.500H5.800z" fill="#8797a5" stroke="#eef0f0" stroke-width=".7"/></svg>
<svg style="left:384px;top:410px;" width="17" height="17" viewBox="0 0 17 17"><circle cx="7.100" cy="7.600" r="6.900" fill="#8fc674"/><path d="M2.200 2.500l5.300 7" stroke="#f0f0f0" stroke-width="1.300" fill="none"/><path d="M7.500 9.500l-2.700 5" stroke="#f0f0f0" stroke-width="1.100" fill="none"/><path d="M5.800 10.300h4.700V7.800l4.500 3.800-4.500 3.800v-2.500H5.800z" fill="#8797a5" stroke="#eef0f0" stroke-width=".7"/></svg>
<svg style="left:384px;top:456px;" width="17" height="17" viewBox="0 0 17 17"><circle cx="7.100" cy="7.600" r="6.900" fill="#8fc674"/><path d="M2.200 2.500l5.300 7" stroke="#f0f0f0" stroke-width="1.300" fill="none"/><path d="M7.500 9.500l-2.700 5" stroke="#f0f0f0" stroke-width="1.100" fill="none"/><path d="M5.800 10.300h4.700V7.800l4.500 3.800-4.500 3.800v-2.500H5.800z" fill="#8797a5" stroke="#eef0f0" stroke-width=".7"/></svg>
<svg style="left:384px;top:525px;" width="17" height="17" viewBox="0 0 17 17"><circle cx="7.100" cy="7.600" r="6.900" fill="#8fc674"/><path d="M2.200 2.500l5.300 7" stroke="#f0f0f0" stroke-width="1.300" fill="none"/><path d="M7.500 9.500l-2.700 5" stroke="#f0f0f0" stroke-width="1.100" fill="none"/><path d="M5.800 10.300h4.700V7.800l4.500 3.800-4.500 3.800v-2.500H5.800z" fill="#8797a5" stroke="#eef0f0" stroke-width=".7"/></svg>
<svg style="left:444px;top:338px;" width="14" height="18" viewBox="0 0 14 18"><path d="M7 1a5 5 0 0 1 5 5c0 2-1.300 3-2 5H4C3.300 9 2 8 2 6a5 5 0 0 1 5-5z" fill="#f0a30a"/><rect x="4" y="12" width="6" height="1" fill="#6e6e6e"/><rect x="4.500" y="14" width="5" height="1" fill="#6e6e6e"/></svg>
<svg style="left:425px;top:137px;" width="11" height="11" viewBox="0 0 11 11"><rect x="0.500" y="0.500" width="10" height="10" fill="#fff" stroke="#c4c4c4"/><path d="M2.500 5.500h6M5.500 2.500v6" stroke="#a8a8a8"/></svg>
<svg style="left:425px;top:183px;" width="11" height="12" viewBox="0 0 11 12"><path d="M0.500 0.500h10v6.500l-5 4-5-4z" fill="#fff" stroke="#c4c4c4"/><path d="M2.500 4.500h6" stroke="#a8a8a8"/></svg>
<svg style="left:425px;top:227px;" width="11" height="12" viewBox="0 0 11 12"><path d="M0.500 11.500h10v-6.500l-5-4-5 4z" fill="#fff" stroke="#c4c4c4"/><path d="M2.500 7.500h6" stroke="#a8a8a8"/></svg>
<svg style="left:425px;top:252px;" width="11" height="12" viewBox="0 0 11 12"><path d="M0.500 0.500h10v6.500l-5 4-5-4z" fill="#fff" stroke="#c4c4c4"/><path d="M2.500 4.500h6" stroke="#a8a8a8"/></svg>
<svg style="left:425px;top:273px;" width="11" height="12" viewBox="0 0 11 12"><path d="M0.500 11.500h10v-6.500l-5-4-5 4z" fill="#fff" stroke="#c4c4c4"/><path d="M2.500 7.500h6" stroke="#a8a8a8"/></svg>
<svg style="left:425px;top:574px;" width="11" height="12" viewBox="0 0 11 12"><path d="M0.500 0.500h10v6.500l-5 4-5-4z" fill="#fff" stroke="#c4c4c4"/><path d="M2.500 4.500h6" stroke="#a8a8a8"/></svg>
<svg style="left:425px;top:756px;" width="11" height="12" viewBox="0 0 11 12"><path d="M0.500 11.500h10v-6.500l-5-4-5 4z" fill="#fff" stroke="#c4c4c4"/><path d="M2.500 7.500h6" stroke="#a8a8a8"/></svg>
<div style="left:1887px;top:87px;width:10px;height:10px;background:#ebc700;"></div>
<div style="left:1890px;top:101px;width:9px;height:85px;background:rgba(0,0,0,.11);"></div>
<div style="left:1885px;top:107px;width:14px;height:1px;background:#a99cea;"></div>
<div style="left:1885px;top:132px;width:14px;height:1px;background:#a99cea;"></div>
<div style="left:1885px;top:138px;width:14px;height:1px;background:#a99cea;"></div>
<div style="left:1885px;top:144px;width:14px;height:1px;background:#a99cea;"></div>
<div style="left:1885px;top:152px;width:14px;height:1px;background:#a99cea;"></div>
<div style="left:1885px;top:170px;width:14px;height:1px;background:#ebc700;"></div>
<div style="left:1885px;top:172px;width:14px;height:1px;background:#ebc700;"></div>
<div style="left:1885px;top:174px;width:14px;height:1px;background:#ebc700;"></div>
<div style="left:1885px;top:176px;width:14px;height:1px;background:#ebc700;"></div>
<div style="left:1885px;top:178px;width:14px;height:1px;background:#ebc700;"></div>
<div style="left:1885px;top:180px;width:14px;height:1px;background:#ebc700;"></div>
<div style="left:1885px;top:182px;width:14px;height:1px;background:#ebc700;"></div>
<div style="left:1885px;top:202px;width:14px;height:1px;background:#ebc700;"></div>
<div style="left:1885px;top:207px;width:14px;height:1px;background:#ebc700;"></div>
<div style="left:1885px;top:212px;width:14px;height:1px;background:#ebc700;"></div>
<div style="left:1885px;top:217px;width:14px;height:2px;background:#ebc700;"></div>
<div style="left:1885px;top:256px;width:14px;height:1px;background:#ebc700;"></div>
<div style="left:1885px;top:260px;width:14px;height:1px;background:#ebc700;"></div>
<div style="left:1885px;top:264px;width:14px;height:1px;background:#ebc700;"></div>
<div style="left:1885px;top:273px;width:14px;height:2px;background:#ebc700;"></div>
<div style="left:1885px;top:284px;width:14px;height:1px;background:#dccfa0;"></div>
<div style="left:1885px;top:337px;width:14px;height:4px;background:#ebc700;"></div>
<div style="left:1885px;top:374px;width:14px;height:1px;background:#dccfa0;"></div>
<div style="left:1885px;top:438px;width:14px;height:1px;background:#ebc700;"></div>
<div style="left:1885px;top:441px;width:14px;height:1px;background:#ebc700;"></div>
<div style="left:1885px;top:472px;width:14px;height:4px;background:#ebc700;"></div>
<div style="left:1885px;top:511px;width:14px;height:1px;background:#ebc700;"></div>
<div style="left:1885px;top:514px;width:14px;height:1px;background:#ebc700;"></div>
<div style="left:1885px;top:550px;width:14px;height:1px;background:#ebc700;"></div>
<div style="left:1885px;top:594px;width:14px;height:1px;background:#ebc700;"></div>
<div style="left:1885px;top:638px;width:14px;height:1px;background:#ebc700;"></div>
<div style="left:1885px;top:666px;width:14px;height:2px;background:#ebc700;"></div>
<div style="left:1885px;top:669px;width:14px;height:2px;background:#ebc700;"></div>
<div style="left:1885px;top:672px;width:14px;height:2px;background:#ebc700;"></div>
<div style="left:1885px;top:675px;width:14px;height:2px;background:#ebc700;"></div>
<div style="left:1885px;top:677px;width:14px;height:2px;background:#ebc700;"></div>
<div style="left:348px;top:773px;width:1551px;height:24px;background:#f0f0f0;"></div>
<div style="left:348px;top:773px;width:1551px;height:1px;background:#dedede;"></div>
<span class="t" style="left:440px;top:776px;font-size:12px;color:#5a5a5a;letter-spacing:0.546px;">UserController</span>
<svg style="left:535px;top:780px;" width="6" height="10" viewBox="0 0 6 10"><path d="M1.500 1.500l3 3.500-3 3.500" fill="none" stroke="#9a9a9a" stroke-width="1"/></svg>
<span class="t" style="left:549px;top:776px;font-size:12px;color:#5a5a5a;letter-spacing:0.240px;">userService</span>
<div style="left:22px;top:797px;width:1877px;height:1px;background:#c9c9c9;"></div>
<div style="left:1900px;top:58px;width:20px;height:939px;background:#f2f2f2;"></div>
<div style="left:1899px;top:58px;width:1px;height:939px;background:#d1d1d1;"></div>
<span class="t" style="left:1903px;top:63px;font-size:15px;color:#6e6e6e;font-weight:bold;font-style:italic;">m</span>
<span class="t" style="left:1909px;top:102.5px;font-size:11px;color:#000;transform:translate(-50%,-50%) rotate(90deg);letter-spacing:0.094px;">Maven</span>
<svg style="left:1903px;top:138px;" width="13" height="13" viewBox="0 0 13 13"><ellipse cx="6.500" cy="7" rx="2" ry="4" fill="#6e6e6e"/><path d="M1 2l4 4M12 2L8 6M0.500 7h4M12.500 7h-4M1 12l4-3.500M12 12L8 8.500" stroke="#6e6e6e" stroke-width="1"/></svg>
<span class="t" style="left:1909px;top:166px;font-size:11px;color:#000;transform:translate(-50%,-50%) rotate(90deg);letter-spacing:0.328px;">Ant</span>
<svg style="left:1903px;top:197px;" width="13" height="13" viewBox="0 0 13 13"><path d="M2 2h5a4.500 4.500 0 0 1 0 9H2z" fill="none"/><path d="M3 1.500h4c2 0 3.500 1 4.500 2.500H3z" fill="#f5b800" transform="rotate(90 6.500 6.500)"/><path d="M3 11.500h4c2 0 3.500-1 4.500-2.500H3z" fill="#1ba9a0" transform="rotate(90 6.500 6.500)"/><rect x="4" y="4" width="5" height="5" rx="1" fill="#333" /></svg>
<span class="t" style="left:1909px;top:247px;font-size:11px;color:#000;transform:translate(-50%,-50%) rotate(90deg);letter-spacing:-0.071px;">Elasticsearch</span>
<svg style="left:1903px;top:301px;" width="13" height="14" viewBox="0 0 13 14"><g fill="none" stroke="#6e6e6e" stroke-width="1.200" transform="rotate(90 6.500 7)"><ellipse cx="6.500" cy="3" rx="5" ry="2" fill="#6e6e6e"/><path d="M1.500 3v8c0 1.100 2.200 2 5 2s5-.9 5-2V3"/><path d="M1.500 5.700c0 1.100 2.200 2 5 2s5-.9 5-2M1.500 8.400c0 1.100 2.200 2 5 2s5-.9 5-2"/></g></svg>
<span class="t" style="left:1909px;top:343.5px;font-size:11px;color:#000;transform:translate(-50%,-50%) rotate(90deg);letter-spacing:-0.012px;">Database</span>
<svg style="left:1905px;top:909px;" width="11" height="12" viewBox="0 0 11 12"><rect x="3.500" y="0.500" width="7" height="7" fill="none" stroke="#6e6e6e" stroke-width="1.200"/><path d="M0.500 1v10M2.500 9.500h7M2.500 11.500h7" stroke="#6e6e6e" stroke-width="1" fill="none"/></svg>
<span class="t" style="left:1909px;top:955.8px;font-size:11px;color:#000;transform:translate(-50%,-50%) rotate(90deg);letter-spacing:0.476px;">Word Book</span>
<div style="left:1911px;top:914px;width:9px;height:59px;background:#3b3f45;border:1px solid #2a2d31;border-right:0;box-sizing:border-box;border-radius:1px 0 0 1px"></div>
<div style="left:1914px;top:918px;width:3px;height:52px;background:#2b2e33;"></div>
<div style="left:1914px;top:949px;width:3px;height:20px;background:repeating-linear-gradient(#39a9ea 0 1px,#2b2e33 1px 2px)"></div>
<div style="left:22px;top:798px;width:1877px;height:26px;background:#f2f2f2;"></div>
<div style="left:22px;top:824px;width:1877px;height:1px;background:#d1d1d1;"></div>
<span class="t" style="left:28px;top:802px;font-size:12.6px;color:#000;letter-spacing:-0.162px;">Services</span>
<svg style="left:1819px;top:803px;" width="16" height="16" viewBox="0 0 16 16"><circle cx="8" cy="8" r="6.300" fill="none" stroke="#6e6e6e" stroke-width="1.300"/><path d="M8 1v4.500M8 10.500V15M1 8h4.500M10.500 8H15" stroke="#6e6e6e" stroke-width="1.300"/></svg>
<div style="left:1844px;top:802px;width:1px;height:19px;background:#d0d0d0;"></div>
<svg style="left:1852px;top:803px;" width="16" height="16" viewBox="0 0 16 16"><path d="M8 1.200l1.300.2.500 1.900 1.200.5 1.700-1 1.600 1.600-1 1.700.5 1.200 1.900.5v2.400l-1.900.5-.5 1.200 1 1.700-1.600 1.600-1.700-1-1.200.5-.5 1.900H6.700l-.5-1.900-1.200-.5-1.700 1-1.600-1.600 1-1.700-.5-1.200L.3 9.200V6.800l1.900-.5.500-1.200-1-1.700 1.600-1.600 1.700 1 1.200-.5.500-1.900z" fill="#6e6e6e" transform="translate(1.300,1.300) scale(.84)"/><circle cx="8" cy="8" r="2.300" fill="#f2f2f2"/></svg>
<svg style="left:1879px;top:806px;" width="14" height="10" viewBox="0 0 14 10"><path d="M1 5h12" stroke="#6e6e6e" stroke-width="1.600"/></svg>
<div style="left:22px;top:825px;width:28px;height:172px;background:#f2f2f2;"></div>
<div style="left:50px;top:825px;width:1px;height:172px;background:#d1d1d1;"></div>
<svg style="left:28px;top:831px;" width="17" height="17" viewBox="0 0 17 17"><path d="M10 6A4.500 4.500 0 1 0 8 14.700" fill="none" stroke="#59a869" stroke-width="2.100"/><path d="M10.300 2l5 4.400-5 4.400z" fill="#59a869"/><rect x="9" y="11.300" width="5" height="4.600" fill="#6e6e6e"/></svg>
<svg style="left:29px;top:858px;" width="16" height="16" viewBox="0 0 16 16"><g transform="scale(.9)"><path d="M4.500 1l2 2.500M11.500 1l-2 2.500" stroke="#59a869" stroke-width="1.300" fill="none"/><path d="M5.200 5.500a2.800 2.800 0 0 1 5.600 0z" fill="#59a869"/><rect x="3" y="6.300" width="10" height="9.400" rx="4" fill="#59a869"/><path d="M1.300 8h13.400M1.300 11h13.400M1.800 14h12.400" stroke="#59a869" stroke-width="1.800"/><path d="M4.500 9.500h7M4.500 12.500h7" stroke="#f2f2f2" stroke-width="1"/></g><rect x="7.500" y="8" width="7.500" height="7.500" fill="#f2f2f2"/><rect x="8.500" y="9" width="5.500" height="5.500" fill="#6e6e6e"/></svg>
<div style="left:31px;top:887px;width:10px;height:10px;background:#db5860;"></div>
<svg style="left:28px;top:909.5px;" width="17" height="17" viewBox="0 0 17 17"><path d="M1 8.500h12.500" stroke="#4fae54" stroke-width="1.600"/><path d="M11 5l3.800 3.500L11 12" fill="none" stroke="#4fae54" stroke-width="1.600"/><path d="M6 6.500l4-4M6.800 2.300h3.400v3.400M6 10.500l4 4M6.800 14.700h3.400v-3.400" fill="none" stroke="#4fae54" stroke-width="1.300"/></svg>
<svg style="left:29px;top:936px;" width="15" height="15" viewBox="0 0 15 15"><path d="M7.500 1l3 3-3 3-3-3z" fill="#9aa7b0"/><path d="M7.500 8l3 3-3 3-3-3z" fill="#9aa7b0"/><path d="M3 4.500l3 3-3 3-3-3z" fill="#40b6e0"/><path d="M12 4.500l3 3-3 3-3-3z" fill="#40b6e0"/></svg>
<span class="t" style="left:32px;top:976px;font-size:13px;color:#8a8a8a;">»</span>
<div style="left:51px;top:825px;width:280px;height:27px;background:#f2f2f2;"></div>
<div style="left:51px;top:852px;width:280px;height:1px;background:#d1d1d1;"></div>
<svg style="left:57px;top:831px;" width="14" height="14" viewBox="0 0 14 14"><path d="M1 1.500h12M1 12.500h12" stroke="#6e6e6e" stroke-width="1.600"/><path d="M4 6h6L7 3zM4 8h6l-3 3z" fill="#6e6e6e"/></svg>
<svg style="left:83px;top:832px;" width="14" height="13" viewBox="0 0 14 13"><path d="M1 6.500h12" stroke="#6e6e6e" stroke-width="1.500"/><path d="M4 0.500h6L7 4zM4 12.500h6L7 9z" fill="#6e6e6e"/></svg>
<div style="left:106px;top:829px;width:1px;height:19px;background:#d0d0d0;"></div>
<svg style="left:117px;top:832px;" width="16" height="16" viewBox="0 0 16 16"><rect x="1" y="1" width="4" height="4" fill="#6e6e6e"/><rect x="7" y="1" width="4" height="4" fill="#6e6e6e"/><rect x="1" y="7" width="4" height="4" fill="#6e6e6e"/><rect x="7" y="7" width="4" height="4" fill="#6e6e6e"/><path d="M9 12h6l-3 3.500z" fill="#3c3c3c"/></svg>
<svg style="left:142px;top:831px;" width="18" height="17" viewBox="0 0 18 17"><path d="M1 1.500h12L8.500 7.500V13h-3V7.500z" fill="#6e6e6e"/><path d="M11 13h6l-3 3.500z" fill="#3c3c3c"/></svg>
<svg style="left:166px;top:830px;" width="18" height="16" viewBox="0 0 18 16"><path d="M1 14c1.500 0 2-1 2-2.500V4a2.500 2.500 0 0 1 2.500-2.500h7A2.500 2.500 0 0 1 15 4v7.500c0 1.500.5 2.500 2 2.500" fill="none" stroke="#6e6e6e" stroke-width="1.300"/><path d="M5.500 7.500h7M9 4v7" stroke="#6e6e6e" stroke-width="1.500"/></svg>
<div style="left:191px;top:829px;width:1px;height:19px;background:#d0d0d0;"></div>
<svg style="left:202px;top:832px;" width="17" height="16" viewBox="0 0 17 16"><path d="M1 6h10.500M6.200 1v10" stroke="#6e6e6e" stroke-width="2"/><path d="M10 12h6l-3 3.500z" fill="#3c3c3c"/></svg>
<div style="left:51px;top:853px;width:280px;height:144px;background:#fff;"></div>
<div style="left:331px;top:825px;width:1px;height:172px;background:#d1d1d1;"></div>
<div style="left:51px;top:894px;width:280px;height:20px;background:#d5d5d5;"></div>
<svg style="left:53px;top:858px;" width="11" height="10" viewBox="0 0 11 10"><path d="M1.500 3.300l4 4 4-4" fill="none" stroke="#9a9a9a" stroke-width="1.800"/></svg>
<svg style="left:73px;top:855px;" width="17" height="17" viewBox="0 0 17 17"><path d="M5.200 8.200C3 8 1.800 6.800 2.300 5.500 2.800 4.300 4.500 4.300 6 5" fill="none" stroke="#4a4a4a" stroke-width=".7"/><path d="M4.500 8.300L9 6.500l3 2.500 3.200 4.300-1.600.5L10 11.600l-4 .1-3 1.100L1 14.300l1.500-3.800z" fill="#dea71f"/><path d="M6.500 9.300l1.500.5-1 .9zM5 11.500l1.300.3-.5 1zM10 10l1.300.8-1 .5z" fill="#3a3020"/><path d="M8.200 4.100l1.400 1.200h2.400l1.400-1.200-.2 3.900-1.200 1.700H9.600L8.400 8z" fill="#dcc268" stroke="#5a4a20" stroke-width=".5"/><path d="M9.300 7.300h1v.8h-1zM11.300 7.300h1v.8h-1zM10.300 8.600h1l-.5.700z" fill="#2a2418"/><path d="M9.800 5.800l.5.900M11.800 5.800l-.5.900" stroke="#a8862c" stroke-width=".5"/></svg>
<span class="t" style="left:91px;top:854px;font-size:12.6px;color:#000;letter-spacing:0.216px;">Tomcat Server</span>
<svg style="left:73px;top:878px;" width="11" height="10" viewBox="0 0 11 10"><path d="M1.500 3.300l4 4 4-4" fill="none" stroke="#9a9a9a" stroke-width="1.800"/></svg>
<svg style="left:96px;top:877px;" width="12" height="14" viewBox="0 0 12 14"><path d="M1 1l10 6-10 6z" fill="#59a869"/></svg>
<span class="t" style="left:111px;top:874px;font-size:12.6px;color:#000;letter-spacing:0.011px;">Running</span>
<svg style="left:93px;top:897px;" width="10" height="12" viewBox="0 0 10 12"><path d="M3 2l4 4-4 4" fill="none" stroke="#9a9a9a" stroke-width="1.800"/></svg>
<svg style="left:113px;top:895px;" width="17" height="17" viewBox="0 0 17 17"><path d="M5.200 8.200C3 8 1.800 6.800 2.300 5.500 2.800 4.300 4.500 4.300 6 5" fill="none" stroke="#4a4a4a" stroke-width=".7"/><path d="M4.500 8.300L9 6.500l3 2.500 3.200 4.300-1.600.5L10 11.600l-4 .1-3 1.100L1 14.300l1.500-3.800z" fill="#dea71f"/><path d="M6.500 9.300l1.500.5-1 .9zM5 11.500l1.300.3-.5 1zM10 10l1.300.8-1 .5z" fill="#3a3020"/><path d="M8.200 4.100l1.400 1.200h2.400l1.400-1.200-.2 3.900-1.200 1.700H9.600L8.400 8z" fill="#dcc268" stroke="#5a4a20" stroke-width=".5"/><path d="M9.300 7.300h1v.8h-1zM11.300 7.300h1v.8h-1zM10.300 8.600h1l-.5.700z" fill="#2a2418"/><path d="M9.800 5.800l.5.900M11.800 5.800l-.5.900" stroke="#a8862c" stroke-width=".5"/><path d="M10.300 10l5.700 3.500-5.700 3.500z" fill="#4caf2a"/></svg>
<span class="t" style="left:131px;top:894px;font-size:12.6px;color:#000;font-weight:bold;letter-spacing:0.341px;">train</span>
<span class="t" style="left:164px;top:894px;font-size:12.6px;color:#8c8c8c;letter-spacing:0.299px;">[local]</span>
<div style="left:332px;top:825px;width:1567px;height:27px;background:#f2f2f2;"></div>
<div style="left:332px;top:852px;width:1567px;height:1px;background:#d1d1d1;"></div>
<div style="left:332px;top:851px;width:56px;height:2px;background:#8fa0c4;"></div>
<span class="t" style="left:344px;top:829px;font-size:12px;color:#000;letter-spacing:-0.557px;">Server</span>
<svg style="left:401px;top:833px;" width="12" height="12" viewBox="0 0 12 12"><rect width="12" height="11" fill="#5a5a5a"/><path d="M3 2.500l3.500 3-3.500 3" fill="none" stroke="#f2f2f2" stroke-width="1.400"/></svg>
<span class="t" style="left:418px;top:829px;font-size:12px;color:#000;letter-spacing:-0.037px;">Tomcat Localhost Log</span>
<svg style="left:543px;top:834px;" width="10" height="10" viewBox="0 0 10 10"><path d="M1 1l8 8M9 1L1 9" stroke="#b0b0b0" stroke-width="1"/></svg>
<svg style="left:577px;top:833px;" width="12" height="12" viewBox="0 0 12 12"><rect width="12" height="11" fill="#5a5a5a"/><path d="M3 2.500l3.500 3-3.500 3" fill="none" stroke="#f2f2f2" stroke-width="1.400"/></svg>
<span class="t" style="left:594px;top:829px;font-size:12px;color:#000;letter-spacing:-0.127px;">Tomcat Catalina Log</span>
<svg style="left:710px;top:834px;" width="10" height="10" viewBox="0 0 10 10"><path d="M1 1l8 8M9 1L1 9" stroke="#b0b0b0" stroke-width="1"/></svg>
<div style="left:332px;top:853px;width:1567px;height:26px;background:#f2f2f2;"></div>
<div style="left:332px;top:879px;width:1567px;height:1px;background:#d1d1d1;"></div>
<span class="t" style="left:344px;top:857px;font-size:12px;color:#000;letter-spacing:-0.003px;">Deployment</span>
<div style="left:420px;top:853px;width:1px;height:144px;background:#d1d1d1;"></div>
<span class="t" style="left:433px;top:857px;font-size:12px;color:#000;letter-spacing:0.328px;">Output</span>
<div style="left:332px;top:880px;width:59px;height:117px;background:#fff;"></div>
<div style="left:391px;top:880px;width:29px;height:117px;background:#f2f2f2;"></div>
<svg style="left:335px;top:885px;" width="13" height="11" viewBox="0 0 13 11"><path d="M1.500 6l3.500 3.500L11.500 2" fill="none" stroke="#59a869" stroke-width="2.200"/></svg>
<div style="left:353px;top:882px;width:38px;height:20px;overflow:hidden"><span class="t" style="left:0;top:0;font-size:13px">pro2:War</span></div>
<div style="left:332px;top:986px;width:28px;height:10px;background:#e6e6e6;"></div>
<svg style="left:398px;top:883.5px;" width="17" height="17" viewBox="0 0 17 17"><path d="M1 8.500h12.500" stroke="#4fae54" stroke-width="1.600"/><path d="M11 5l3.800 3.500L11 12" fill="none" stroke="#4fae54" stroke-width="1.600"/><path d="M6 6.500l4-4M6.800 2.300h3.400v3.400M6 10.500l4 4M6.800 14.700h3.400v-3.400" fill="none" stroke="#4fae54" stroke-width="1.300"/></svg>
<svg style="left:398px;top:911.5px;" width="17" height="17" viewBox="0 0 17 17"><g transform="translate(17,0) scale(-1,1)"><path d="M1 8.500h12.500" stroke="#c4c4c4" stroke-width="1.600"/><path d="M11 5l3.800 3.500L11 12" fill="none" stroke="#c4c4c4" stroke-width="1.600"/><path d="M6 6.500l4-4M6.800 2.300h3.400v3.400M6 10.500l4 4M6.800 14.700h3.400v-3.400" fill="none" stroke="#c4c4c4" stroke-width="1.300"/></g></svg>
<svg style="left:398px;top:939px;" width="16" height="16" viewBox="0 0 16 16"><path d="M13.500 7A5.500 5.500 0 0 0 3 5.500M2.500 9A5.500 5.500 0 0 0 13 10.500" fill="none" stroke="#6e6e6e" stroke-width="1.600"/><path d="M1 2.500v4h4zM15 13.500v-4h-4z" fill="#6e6e6e"/></svg>
<svg style="left:398px;top:965px;" width="16" height="17" viewBox="0 0 16 17"><path d="M1.500 9V2h13v7h-3" fill="none" stroke="#6e6e6e" stroke-width="1.400"/><rect x="1" y="1.500" width="14" height="2.500" fill="#6e6e6e"/><path d="M8 6v8M4.500 11L8 15l3.500-4" fill="none" stroke="#59a869" stroke-width="1.800"/></svg>
<div style="left:421px;top:880px;width:1449px;height:117px;background:#fff;"></div>
<div style="left:421px;top:880px;width:1449px;height:117px;overflow:hidden;background:#fff"><div class="c" style="left:13px;top:-10px">==&gt;  Preparing: SELECT id,trainId,fromStationId,toStationId,startTime,arriveTime,startDate,arriveDate,carriageBusiness,carriageLevel1,carriageLevel2,carriageRuanwo,carriageYingwo,carriageYingzuo</div><div class="c" style="left:13px;top:13px">==&gt; Parameters: 24(Integer)</div><div class="c" style="left:13px;top:36px">&lt;==    Columns: id, trainId, fromStationId, toStationId, startTime, arriveTime, startDate, arriveDate, carriageBusiness, carriageLevel1, carriageLevel2, carriageRuanwo</div><div class="c" style="left:13px;top:59px">&lt;==        Row: 24, 14, 3, 14, 08:39, 16:43, 2021-03-13, null, 0, 0, 0, 5, 8, 2, 0, 0, 0, 20, 20, 100, 0, 0, 0, 500, 400, 300</div><div class="c" style="left:13px;top:82px">&lt;==      Total: 1</div><div class="c" style="left:13px;top:105px">Closing non transactional SqlSession [org.apache.ibatis.session.defaults.DefaultSqlSession@3e9aff22]</div><div style="left:13px;top:106px;width:54px;height:11px;background:rgba(0,0,0,.1)"></div></div>
<div style="left:1861px;top:968px;width:9px;height:28px;background:#e0e0e0;"></div>
<div style="left:1870px;top:880px;width:29px;height:117px;background:#f2f2f2;"></div>
<svg style="left:1878px;top:887px;" width="14" height="16" viewBox="0 0 14 16"><path d="M7 14V2.500M2.300 7.200L7 2.500l4.700 4.700" fill="none" stroke="#6e6e6e" stroke-width="1.900"/></svg>
<svg style="left:1878px;top:912px;" width="14" height="16" viewBox="0 0 14 16"><path d="M7 2.500V14M2.300 9.300L7 14l4.700-4.700" fill="none" stroke="#6e6e6e" stroke-width="1.900"/></svg>
<svg style="left:1877px;top:939px;" width="16" height="16" viewBox="0 0 16 16"><path d="M1 2.500h14M1 7h11a2.500 2.500 0 0 1 0 5H8M1 11.500h4" fill="none" stroke="#6e6e6e" stroke-width="1.400"/><path d="M10 9.500l-2.500 2.500 2.500 2.500" fill="none" stroke="#6e6e6e" stroke-width="1.400"/></svg>
<span class="t" style="left:1880px;top:976px;font-size:13px;color:#8a8a8a;">»</span>
<div style="left:0px;top:996px;width:1920px;height:1px;background:#d1d1d1;"></div>
<div style="left:0px;top:997px;width:1920px;height:21px;background:#f2f2f2;"></div>
<div style="left:0px;top:1018px;width:1920px;height:1px;background:#b4b4b4;"></div>
<div style="left:237px;top:997px;width:93px;height:21px;background:#c6c6c6;"></div>
<svg style="left:33px;top:1003px;" width="12" height="11" viewBox="0 0 12 11"><path d="M0 1.500h2M0 5.500h2M0 9.500h2M3.500 1.500H12M3.500 5.500H12M3.500 9.500H12" stroke="#6e6e6e" stroke-width="1.500"/></svg>
<span class="t" style="left:49px;top:999px;font-size:11px;color:#000;letter-spacing:0.054px;"><u>6</u>: TODO</span>
<svg style="left:113px;top:1001px;" width="14" height="14" viewBox="0 0 14 14"><path d="M1.500 3L5 1l4 2.500-1.500 2 5.500 6-1.500 1.500-6-5.500L4.500 8.500z" fill="#6e6e6e"/></svg>
<span class="t" style="left:130px;top:999px;font-size:11px;color:#000;letter-spacing:0.506px;">Build</span>
<svg style="left:177px;top:1002px;" width="14" height="13" viewBox="0 0 14 13"><path d="M1 11C1 5 5 2 13 1c.500 6-2 11-7.500 11-2 0-3.500-.500-4.500-1z" fill="#6e6e6e"/><path d="M1 12.500c3-4 6-6 9.500-7.500" stroke="#f2f2f2" stroke-width=".9" fill="none"/></svg>
<span class="t" style="left:194px;top:999px;font-size:11px;color:#000;letter-spacing:0.367px;">Spring</span>
<svg style="left:249px;top:1001px;" width="15" height="15" viewBox="0 0 15 15"><path d="M4 1h7l3 3v5l-3 3H4L1 9V4z" fill="#6e6e6e"/><path d="M5.500 3.500l5 3-5 3z" fill="#c6c6c6"/><circle cx="11.500" cy="12" r="2.600" fill="#3bc43b"/></svg>
<span class="t" style="left:266px;top:999px;font-size:11px;color:#000;letter-spacing:-0.038px;"><u>8</u>: Services</span>
<svg style="left:342px;top:1002px;" width="12" height="12" viewBox="0 0 12 12"><rect width="12" height="11" fill="#5a5a5a"/><path d="M2.500 2.500l3 2.500-3 2.500M6.500 8.500h3.500" fill="none" stroke="#f2f2f2" stroke-width="1.200"/></svg>
<span class="t" style="left:358px;top:999px;font-size:11px;color:#000;letter-spacing:0.428px;">Terminal</span>
<svg style="left:426px;top:1002px;" width="13" height="13" viewBox="0 0 13 13"><path d="M1 1h10v3H4v8H1z" fill="#6e6e6e"/><rect x="5" y="5.500" width="7.500" height="7" fill="none" stroke="#6e6e6e" stroke-width="1.200"/><path d="M5 8.500h7.500M8.700 8.500V12" stroke="#6e6e6e" stroke-width="1"/></svg>
<span class="t" style="left:441px;top:999px;font-size:11px;color:#000;letter-spacing:0.104px;">Java Enterprise</span>
<svg style="left:1819px;top:1002px;" width="14" height="14" viewBox="0 0 14 14"><path d="M7 1a6 6 0 1 0 6 6V13H7" fill="none" stroke="#6e6e6e" stroke-width="1.300"/><path d="M7 1a6 6 0 0 1 6 6" fill="none" stroke="#6e6e6e" stroke-width="1.300"/></svg>
<span class="t" style="left:1836px;top:999px;font-size:11px;color:#000;letter-spacing:0.273px;">Event Log</span>
<div style="left:0px;top:1019px;width:1920px;height:21px;background:#f2f2f2;"></div>
<svg style="left:5px;top:1022px;" width="14" height="14" viewBox="0 0 14 14"><rect x="3.500" y="0.500" width="10" height="10" fill="none" stroke="#6e6e6e"/><path d="M1.500 3v10.500H12" fill="none" stroke="#6e6e6e"/></svg>
<span class="t" style="left:27px;top:1019px;font-size:13px;color:#000;letter-spacing:0.131px;">All files are up-to-date (18 minutes ago)</span>
<span class="t" style="left:1657px;top:1019px;font-size:12px;color:#000;letter-spacing:0.194px;">32:15</span>
<span class="t" style="left:1700.5px;top:1019px;font-size:11.3px;color:#000;letter-spacing:-0.500px;">CRLF</span>
<span class="t" style="left:1740px;top:1019px;font-size:12px;color:#000;letter-spacing:0.000px;">UTF-8</span>
<span class="t" style="left:1786px;top:1019px;font-size:12px;color:#000;letter-spacing:0.371px;">4 spaces</span>
<svg style="left:1848px;top:1021px;" width="12" height="14" viewBox="0 0 12 14"><rect x="4" y="6.500" width="8" height="6.500" fill="#6e6e6e"/><path d="M2.500 7V4a2.500 2.500 0 0 1 5 0v2.500" fill="none" stroke="#6e6e6e" stroke-width="1.500"/></svg>
<svg style="left:1873px;top:1022px;" width="13" height="14" viewBox="0 0 13 14"><path d="M3.500 0.800h6l.8 4H2.700z" fill="#6e6e6e"/><path d="M0.500 5.300h12" stroke="#6e6e6e" stroke-width="1.300"/><path d="M3 6v2.500a3.500 3.500 0 0 0 7 0V6" fill="none" stroke="#6e6e6e" stroke-width="1"/><path d="M1.500 13.500c.5-1.500 2-2 3.500-2h3c1.500 0 3 .5 3.500 2" fill="none" stroke="#6e6e6e" stroke-width="1"/><circle cx="5.200" cy="7.800" r=".6" fill="#6e6e6e"/><circle cx="7.800" cy="7.800" r=".6" fill="#6e6e6e"/></svg>
<svg style="left:1896px;top:1023px;" width="12" height="12" viewBox="0 0 12 12"><g transform="scale(.8)"><path d="M13.500 7.500A6 6 0 1 1 11.500 3" fill="none" stroke="#ea4335" stroke-width="2.400"/><path d="M2.200 10.500A6 6 0 0 1 2.200 4.500" fill="none" stroke="#fbbc05" stroke-width="2.400"/><path d="M2.500 11A6 6 0 0 0 11.500 12" fill="none" stroke="#34a853" stroke-width="2.400"/><path d="M11.500 12A6 6 0 0 0 13.500 7.500H7.500" fill="none" stroke="#4285f4" stroke-width="2.400"/></g></svg>
<span class="t" style="left:1692px;top:1019px;font-size:15px;color:rgba(255,255,255,.7);letter-spacing:0.270px;text-shadow:0 0 2px rgba(120,120,120,.4);">blog.csdn.net/weixin_39317764</span>
<div style="left:0px;top:1040px;width:1920px;height:8px;background:#c9e0e8;"></div>
<div style="left:49px;top:1040px;width:342px;height:8px;background:#fff;"></div>
<div style="left:638px;top:1040px;width:44px;height:8px;background:#e3eef2;"></div>
<div style="left:682px;top:1040px;width:1px;height:8px;background:#b9c9d0;"></div>
<div style="left:0;top:1040px;width:1920px;height:8px;overflow:hidden"><span class="t" style="left:1816px;top:4px;font-size:12px;line-height:14px;height:14px;color:#111">16:22</span></div>
<div style="left:1915px;top:1040px;width:1px;height:8px;background:#8fa3ad;"></div>
</body></html>
